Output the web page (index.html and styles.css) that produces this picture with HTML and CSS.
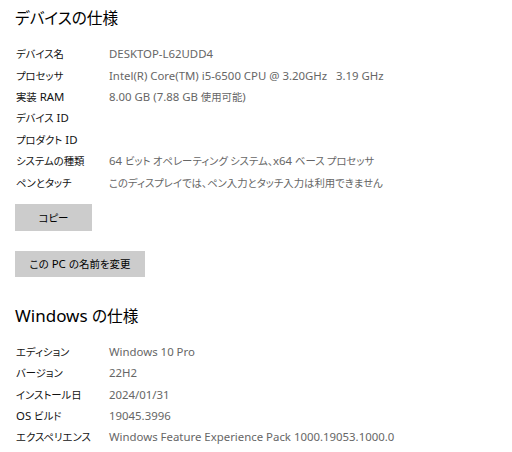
FILE: index.html
```html
<!DOCTYPE html>
<html lang="ja">
<head>
<meta charset="utf-8">
<link rel="stylesheet" href="styles.css">
</head>
<body>
<div class="page">
  <h2 class="title"><span class="ja">デバイスの仕様</span></h2>
  <dl class="specs">
    <dt><span class="ja">デバイス名</span></dt><dd>DESKTOP-L62UDD4</dd>
    <dt><span class="ja">プロセッサ</span></dt><dd>Intel(R) Core(TM) i5-6500 CPU @ 3.20GHz&nbsp;&nbsp;&nbsp;3.19 GHz</dd>
    <dt><span class="ja">実装</span> RAM</dt><dd>8.00 GB (7.88 GB <span class="ja">使用可能</span>)</dd>
    <dt><span class="ja">デバイス</span> ID</dt><dd></dd>
    <dt><span class="ja">プロダクト</span> ID</dt><dd></dd>
    <dt><span class="ja">システムの種類</span></dt><dd>64 <span class="ja">ビット オペレーティング システム、</span>x64 <span class="ja">ベース プロセッサ</span></dd>
    <dt><span class="ja">ペンとタッチ</span></dt><dd><span class="ja">このディスプレイでは、ペン入力とタッチ入力は利用できません</span></dd>
  </dl>
  <button class="btn btn-copy"><span class="ja">コピー</span></button>
  <button class="btn btn-rename"><span class="ja">この</span> PC <span class="ja">の名前を変更</span></button>
  <h2 class="title title-win">Windows <span class="ja">の仕様</span></h2>
  <dl class="specs">
    <dt><span class="ja">エディション</span></dt><dd>Windows 10 Pro</dd>
    <dt><span class="ja">バージョン</span></dt><dd>22H2</dd>
    <dt><span class="ja">インストール日</span></dt><dd>2024/01/31</dd>
    <dt>OS <span class="ja">ビルド</span></dt><dd>19045.3996</dd>
    <dt><span class="ja">エクスペリエンス</span></dt><dd>Windows Feature Experience Pack 1000.19053.1000.0</dd>
  </dl>
</div>
</body>
</html>
```

FILE: styles.css
```css
html, body {
  margin: 0;
  padding: 0;
  background: #ffffff;
}
body {
  font-family: "Noto Sans", "Noto Sans CJK JP", sans-serif;
  font-feature-settings: "palt";
  color: #000;
}
.ja {
  font-family: "Noto Sans CJK JP", sans-serif;
  font-size: 0.91em;
}
.page {
  padding: 4px 15px 0 15px;
  display: flex;
  flex-direction: column;
  align-items: flex-start;
}
.title {
  margin: 0;
  font-size: 17px;
  font-weight: 400;
  line-height: 28px;
  color: #000;
}
.title .ja {
  font-size: 0.92em;
}
.title-win {
  margin-top: 25px;
}
.specs {
  margin: 11px 0 0 0;
  display: grid;
  grid-template-columns: 94px auto;
  grid-auto-rows: 21.4px;
  align-items: center;
  font-size: 11.4px;
}
.specs dt {
  margin: 0;
  padding-left: 1px;
  color: #111;
}
.specs dd {
  margin: 0;
  color: #666666;
  white-space: nowrap;
}
.btn {
  font-family: inherit;
  font-feature-settings: "palt";
  font-size: 11.5px;
  color: #000;
  background: #cccccc;
  border: none;
  padding: 0;
  margin: 0;
}
.btn-copy {
  margin-top: 11px;
  width: 77px;
  height: 27px;
}
.btn-rename {
  margin-top: 20px;
  width: 130px;
  height: 26px;
}
```
